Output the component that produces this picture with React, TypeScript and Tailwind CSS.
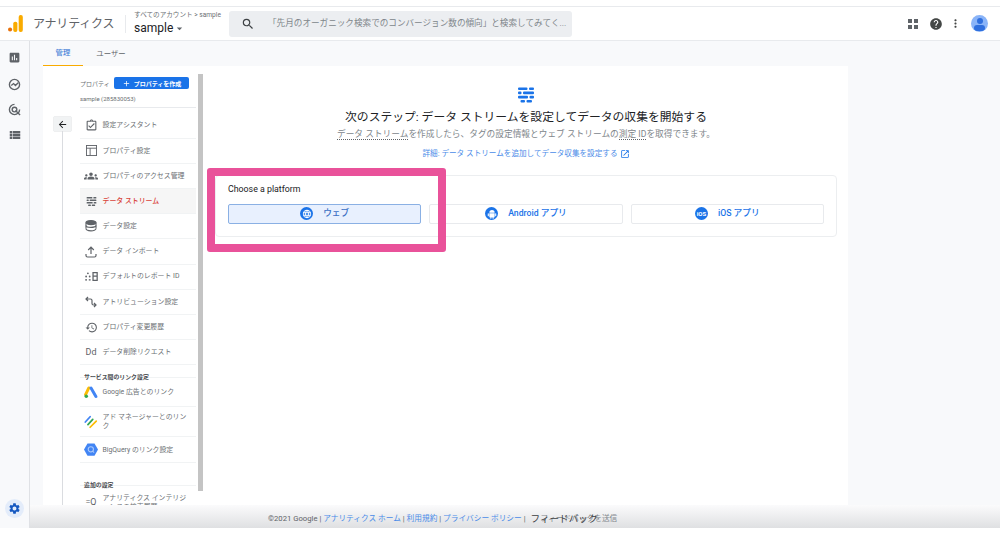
import {
  MdAdd,
  MdArrowBack,
  MdArrowDropDown,
  MdAssessment,
  MdGroups,
  MdHelp,
  MdHistory,
  MdLanguage,
  MdMoreVert,
  MdOpenInNew,
  MdOutlineAssignmentTurnedIn,
  MdSearch,
  MdSettings,
  MdViewList,
} from "react-icons/md";
import type { ReactNode } from "react";

const StreamIcon = ({ className, color }: { className: string; color: string }) => (
  <svg viewBox="0 0 18 18" className={className} fill={color}>
    <rect x="1" y="1.5" width="9.5" height="2.6" rx="1" />
    <rect x="12" y="1.5" width="5" height="2.6" rx="1" />
    <rect x="1" y="5.6" width="3.5" height="2.6" rx="1" />
    <rect x="6" y="5.6" width="11" height="2.6" rx="1" />
    <rect x="1" y="9.8" width="10" height="2.6" rx="1" />
    <rect x="12.5" y="9.8" width="4.5" height="2.6" rx="1" />
    <rect x="3.5" y="13.9" width="4.5" height="2.6" rx="1" />
    <rect x="9.5" y="13.9" width="5.5" height="2.6" rx="1" />
  </svg>
);

const AnalyticsLogo = () => (
  <svg viewBox="0 0 16 18" className="h-[17px] w-[15px]">
    <circle cx="2.2" cy="15.4" r="2.2" fill="#e8710a" />
    <rect x="5.6" y="7" width="4.4" height="11" rx="2" fill="#f9ab00" />
    <rect x="11.4" y="0" width="4.4" height="18" rx="2" fill="#f9ab00" />
  </svg>
);

const GoogleAdsLogo = () => (
  <svg viewBox="0 0 16 14" className="h-[13px] w-[14px]">
    <path d="M5.5 1.8 1.8 9.5" stroke="#fbbc04" strokeWidth="3.4" strokeLinecap="round" />
    <path d="M8 1.8 13.6 11.6" stroke="#4285f4" strokeWidth="3.4" strokeLinecap="round" />
    <circle cx="2.6" cy="11.2" r="2" fill="#34a853" />
  </svg>
);

const AdManagerLogo = () => (
  <svg viewBox="0 0 16 16" className="h-[14px] w-[14px]" strokeWidth="2" strokeLinecap="round">
    <path d="M1.5 8 7 2" stroke="#4285f4" />
    <path d="M4.5 11 10 5" stroke="#34a853" />
    <path d="M7 14 14 7" stroke="#fbbc04" />
  </svg>
);

const BigQueryLogo = () => (
  <svg viewBox="0 0 16 14" className="h-[13px] w-[14px]">
    <path d="M4 0h8l4 7-4 7H4L0 7z" fill="#4285f4" />
    <circle cx="7.8" cy="6.8" r="3" fill="none" stroke="#aecbfa" strokeWidth="1.2" />
    <path d="M10 9l1.6 1.6" stroke="#aecbfa" strokeWidth="1.2" />
  </svg>
);

const ReportIdIcon = () => (
  <svg viewBox="0 0 14 10" className="h-[9px] w-[13px]" fill="#5f6368">
    <circle cx="3" cy="1.5" r="1" />
    <circle cx="1" cy="5" r="1" />
    <circle cx="5" cy="5" r="1" />
    <rect x="0" y="8" width="2" height="1.5" />
    <rect x="4" y="8" width="2" height="1.5" />
    <path d="M8 0h6v10H8zm1.4 1.4v2.6h3.2V1.4zm0 4v3.2h3.2V5.4z" fillRule="evenodd" />
  </svg>
);

const PropertyIcon = () => (
  <svg viewBox="0 0 12 12" className="h-[11px] w-[11px]" fill="none" stroke="#5f6368" strokeWidth="1">
    <rect x="0.5" y="0.5" width="11" height="11" />
    <path d="M0.5 3.5h11M4.5 3.5v8" />
  </svg>
);

const DatabaseIcon = () => (
  <svg viewBox="0 0 12 12" className="h-[12px] w-[12px]" fill="none" stroke="#5f6368" strokeWidth="1.1">
    <ellipse cx="6" cy="2.6" rx="5" ry="2" fill="#5f6368" />
    <path d="M1 5.4c0 2.6 10 2.6 10 0M1 8.6c0 3 10 3 10 0" />
    <path d="M1 2.6v6M11 2.6v6" />
  </svg>
);

const UploadIcon = () => (
  <svg viewBox="0 0 12 12" className="h-[12px] w-[12px]" fill="none" stroke="#5f6368" strokeWidth="1.2">
    <path d="M6 8V1.5M3.2 4 6 1.2 8.8 4" />
    <path d="M1 8v1.5c0 1 .6 1.5 1.5 1.5h7c.9 0 1.5-.5 1.5-1.5V8" />
  </svg>
);

const AttributionIcon = () => (
  <svg viewBox="0 0 12 12" className="h-[12px] w-[12px]" fill="none" stroke="#5f6368" strokeWidth="1.2">
    <path d="M3 1 1 3l2 2M1 3h4.5c1 0 1.5.6 1.5 1.5v3c0 .9.5 1.5 1.5 1.5H11M9 7l2 2-2 2" />
  </svg>
);

const AppsIcon = () => (
  <svg viewBox="0 0 10 10" className="h-[10px] w-[10px]" fill="#5f6368">
    <rect x="0" y="0" width="4" height="4" />
    <rect x="6" y="0" width="4" height="4" />
    <rect x="0" y="6" width="4" height="4" />
    <rect x="6" y="6" width="4" height="4" />
  </svg>
);

const AndroidIcon = () => (
  <svg viewBox="0 0 12 12" className="h-[10px] w-[10px]" fill="#ffffff">
    <path d="M2.8 4.4a3.2 3.2 0 0 1 6.4 0z" />
    <path d="M2.8 5h6.4v4.4a.8.8 0 0 1-.8.8H3.6a.8.8 0 0 1-.8-.8z" />
    <rect x="0.9" y="5" width="1.3" height="3.8" rx="0.65" />
    <rect x="9.8" y="5" width="1.3" height="3.8" rx="0.65" />
    <rect x="4" y="9.5" width="1.3" height="2.3" rx="0.65" />
    <rect x="6.7" y="9.5" width="1.3" height="2.3" rx="0.65" />
  </svg>
);

type Row = { label: string; icon: ReactNode; active?: boolean; height: string };

const iconClass = "h-[13px] w-[13px] text-[#5f6368]";
const rowHeight = "h-[25.2px]";

const settings: Row[] = [
  { label: "設定アシスタント", height: rowHeight, icon: <MdOutlineAssignmentTurnedIn className={iconClass} /> },
  { label: "プロパティ設定", height: rowHeight, icon: <PropertyIcon /> },
  { label: "プロパティのアクセス管理", height: rowHeight, icon: <MdGroups className="h-[14px] w-[14px] text-[#5f6368]" /> },
  { label: "データ ストリーム", height: rowHeight, icon: <StreamIcon className="h-[11px] w-[11px]" color="#5f6368" />, active: true },
  { label: "データ設定", height: rowHeight, icon: <DatabaseIcon /> },
  { label: "データ インポート", height: rowHeight, icon: <UploadIcon /> },
  { label: "デフォルトのレポート ID", height: rowHeight, icon: <ReportIdIcon /> },
  { label: "アトリビューション設定", height: rowHeight, icon: <AttributionIcon /> },
  { label: "プロパティ変更履歴", height: rowHeight, icon: <MdHistory className={iconClass} /> },
  { label: "データ削除リクエスト", height: rowHeight, icon: <span className="text-[9px] text-[#5f6368]">Dd</span> },
];

const links: Row[] = [
  { label: "Google 広告とのリンク", height: "h-[29px]", icon: <GoogleAdsLogo /> },
  { label: "アド マネージャーとのリンク", height: "h-[30px]", icon: <AdManagerLogo /> },
  { label: "BigQuery のリンク設定", height: "h-[26px]", icon: <BigQueryLogo /> },
];

const NavRow = ({ row }: { row: Row }) => (
  <div className={`flex items-center border-b border-[#f1f3f4] ${row.height} ${row.active ? "bg-[#f6f6f6]" : ""}`}>
    <div className="flex w-[22px] shrink-0 justify-center">{row.icon}</div>
    <span className={`ml-[0.5px] w-[86px] text-[6.9px] leading-[8.5px] ${row.active ? "font-medium text-[#d9433a]" : "text-[#6b6f73]"}`}>
      {row.label}
    </span>
  </div>
);

const SectionTitle = ({ label, className }: { label: string; className: string }) => (
  <div className={`h-[6px] border-b border-[#f1f3f4] pl-[4px] text-[5.9px] font-bold leading-[10px] text-[#4a4d51] ${className}`}>
    {label}
  </div>
);

const Sidebar = () => (
  <div className="relative flex h-[439px] w-[161px] shrink-0 overflow-hidden">
    <div className="flex w-[37px] shrink-0 flex-col items-center pt-[51px]">
      <div className="ml-[1px] flex h-[14px] w-[17px] items-center justify-center bg-[#f1f3f4] shadow-[0_0_1px_#9aa0a6]">
        <MdArrowBack className="h-[11px] w-[11px] text-[#202124]" />
      </div>
      <div className="ml-[1px] w-[1px] flex-1 bg-[#dadce0]" />
    </div>
    <div className="w-[116px] shrink-0 pt-[11px]">
      <div className="flex h-[12px] items-center">
        <span className="w-[34px] text-[6px] text-[#6b6f73]">プロパティ</span>
        <div className="flex h-[12px] w-[75px] items-center justify-center rounded-[2px] bg-[#1a73e8] text-[6px] font-bold text-white">
          <MdAdd className="mr-[3px] h-[9px] w-[9px]" />
          プロパティを作成
        </div>
      </div>
      <div className="mt-[4px] border-b border-[#e8eaed] pb-[3px] text-[6px] leading-[11px] text-[#6b6f73]">
        sample (285830053)
      </div>
      <div className="mt-[5.5px]">
        {settings.map((row) => (
          <NavRow key={row.label} row={row} />
        ))}
      </div>
      <SectionTitle label="サービス間のリンク設定" className="mt-[7px]" />
      {links.map((row) => (
        <NavRow key={row.label} row={row} />
      ))}
      <SectionTitle label="追加の設定" className="mt-[17px]" />
      <div className="pt-[2px]">
        <NavRow
          row={{
            label: "アナリティクス インテリジェンスの検索履歴",
            height: "h-[30px]",
            icon: <span className="text-[9px] text-[#5f6368]">=Q</span>,
          }}
        />
      </div>
    </div>
    <div className="ml-[2px] mt-[8px] h-[417px] w-[5px] bg-[#c4c4c4]" />
  </div>
);

const PlatformButton = ({ icon, label, selected }: { icon: ReactNode; label: string; selected?: boolean }) => (
  <div
    className={`flex h-[19.5px] flex-1 items-center justify-center gap-[10px] rounded-[2px] border text-[8.7px] font-medium ${
      selected ? "border-[#8ab0e4] bg-[#e8f0fe] text-[#3b6fc4]" : "border-[#e8eaed] bg-white text-[#1a73e8]"
    }`}
  >
    <span className="flex h-[13px] w-[13px] items-center justify-center rounded-full bg-[#1a73e8] text-white">{icon}</span>
    {label}
  </div>
);

export default function App() {
  return (
    <div
      className="relative flex h-[535px] w-[1000px] flex-col overflow-hidden bg-white text-[#202124]"
      style={{ fontFamily: 'Roboto, "Noto Sans CJK JP", sans-serif' }}
    >
      <div className="h-[7px] shrink-0 border-b border-[#e8eaed]" />
      <header className="flex h-[34px] shrink-0 items-center border-b border-[#e8eaed] pl-[8px] pr-[12px]">
        <AnalyticsLogo />
        <span className="ml-[10px] w-[83px] whitespace-nowrap text-[12px] tracking-[-0.2px] text-[#5f6368]">アナリティクス</span>
        <div className="ml-[9px] h-[18px] w-[1px] bg-[#e8eaed]" />
        <div className="ml-[8px] w-[95px]">
          <div className="-mt-[1px] mb-[1px] whitespace-nowrap text-[6.6px] leading-[9px] text-[#6b6f73]">すべてのアカウント &gt; sample</div>
          <div className="flex h-[14px] items-center text-[12px] leading-[14px] text-[#202124]">
            sample
            <MdArrowDropDown className="h-[13px] w-[13px] text-[#5f6368]" />
          </div>
        </div>
        <div className="flex h-[26px] w-[343px] items-center rounded-[3px] bg-[#eceef1] pl-[12px]">
          <MdSearch className="h-[14px] w-[14px] text-[#3c4043]" />
          <span className="ml-[13px] whitespace-nowrap text-[8.6px] text-[#80868b]">
            「先月のオーガニック検索でのコンバージョン数の傾向」と検索してみてく...
          </span>
        </div>
        <div className="ml-auto flex items-center">
          <AppsIcon />
          <MdHelp className="ml-[11px] h-[14px] w-[14px] text-[#444746]" />
          <MdMoreVert className="ml-[6px] h-[13px] w-[13px] text-[#444746]" />
          <div className="relative ml-[9px] h-[17px] w-[17px] overflow-hidden rounded-full bg-[#8ab4f8]">
            <div className="absolute left-[5.5px] top-[3px] h-[6px] w-[6px] rounded-full bg-[#2f6fde]" />
            <div className="absolute left-[3px] top-[10px] h-[6px] w-[11px] rounded-full bg-[#2f6fde]" />
          </div>
        </div>
      </header>

      <div className="flex min-h-0 flex-1 bg-[#f8f9fb]">
        <aside className="flex w-[30px] shrink-0 flex-col items-center border-r border-[#dfe1e5] pt-[10px]">
          <MdAssessment className="h-[13px] w-[13px] text-[#5f6368]" />
          <svg viewBox="0 0 14 14" className="mt-[14px] h-[13px] w-[13px]" fill="none" stroke="#5f6368" strokeWidth="1.5">
            <circle cx="7" cy="7" r="5.5" />
            <path d="M3.5 8 6 6l2 2 3-3" />
          </svg>
          <svg viewBox="0 0 14 14" className="mt-[12px] h-[13px] w-[13px]" fill="none" stroke="#5f6368" strokeWidth="1.5">
            <path d="M7 1.5A5.5 5.5 0 1 0 12.5 7" />
            <circle cx="7" cy="7" r="2.5" />
            <path d="M8 8l5 5" />
          </svg>
          <MdViewList className="mt-[12px] h-[14px] w-[14px] text-[#5f6368]" />
          <div className="mt-auto mb-[10px] flex h-[19px] w-[19px] items-center justify-center rounded-full bg-[#e3ecfa]">
            <MdSettings className="h-[13px] w-[13px] text-[#1558c0]" />
          </div>
        </aside>

        <div className="min-w-0 flex-1 pl-[13px]">
          <nav className="flex h-[25px] items-center text-[7.4px]">
            <div className="flex h-[25px] w-[40px] items-center justify-center border-b border-[#f9ab00] font-medium text-[#4a84d8]">管理</div>
            <div className="flex w-[56px] items-center justify-center text-[#5f6368]">ユーザー</div>
          </nav>
          <div className="flex h-[439px] w-[805px] bg-white">
            <Sidebar />
            <main className="min-w-0 flex-1">
              <div className="flex flex-col items-center pt-[20px]">
                <StreamIcon className="h-[18px] w-[18px]" color="#1a73e8" />
                <h1 className="mt-[4px] whitespace-nowrap text-[11.8px] leading-[18px] text-[#202124]">
                  次のステップ: データ ストリームを設定してデータの収集を開始する
                </h1>
                <p className="mt-[2px] whitespace-nowrap text-[8.7px] leading-[13px] text-[#80868b]">
                  <span className="border-b border-dotted border-[#5f6368]">データ ストリーム</span>
                  を作成したら、タグの設定情報とウェブ ストリームの
                  <span className="border-b border-dotted border-[#5f6368]">測定 ID</span>
                  を取得できます。
                </p>
                <a className="mt-[7px] flex items-center whitespace-nowrap text-[7.6px] leading-[11px] text-[#4a8be8]">
                  詳細: データ ストリームを追加してデータ収集を設定する
                  <MdOpenInNew className="ml-[2px] h-[10px] w-[10px] text-[#1a73e8]" />
                </a>
              </div>
              <section className="ml-[11px] mt-[16px] h-[62px] w-[622px] rounded-[4px] border border-[#eceef0] px-[12px] pt-[7px]">
                <div className="text-[8.8px] leading-[12px] text-[#202124]">Choose a platform</div>
                <div className="mt-[9px] flex gap-[8px]">
                  <PlatformButton selected label="ウェブ" icon={<MdLanguage className="h-[10px] w-[10px]" />} />
                  <PlatformButton label="Android アプリ" icon={<AndroidIcon />} />
                  <PlatformButton label="iOS アプリ" icon={<span className="text-[6px] font-bold">iOS</span>} />
                </div>
              </section>
            </main>
          </div>
        </div>
      </div>

      <div className="absolute left-[207px] top-[168px] h-[84px] w-[239px] rounded-[3px] border-[8px] border-[#e9529a]" />

      <footer className="absolute bottom-[7px] left-[30px] right-0 flex h-[23px] items-center bg-gradient-to-b from-[#fbfbfc] to-[#dfe0e2] pl-[238px] pt-[4px] text-[7.7px] text-[#5f6368]">
        <span className="whitespace-nowrap">
          ©2021 Google | <span className="text-[#4a8be8]">アナリティクス ホーム</span> | <span className="text-[#4a8be8]">利用規約</span> |{" "}
          <span className="text-[#4a8be8]">プライバシー ポリシー</span> |
        </span>
        <span className="relative ml-[5px] whitespace-nowrap text-[#80868b]">
          <span className="ml-[10px]">フィードバックを送信</span>
          <span className="absolute left-0 top-[-1px] text-[9.6px] text-[#3c4043]">フィードバック</span>
        </span>
      </footer>
      <div className="h-[7px] shrink-0 bg-white" />
    </div>
  );
}
